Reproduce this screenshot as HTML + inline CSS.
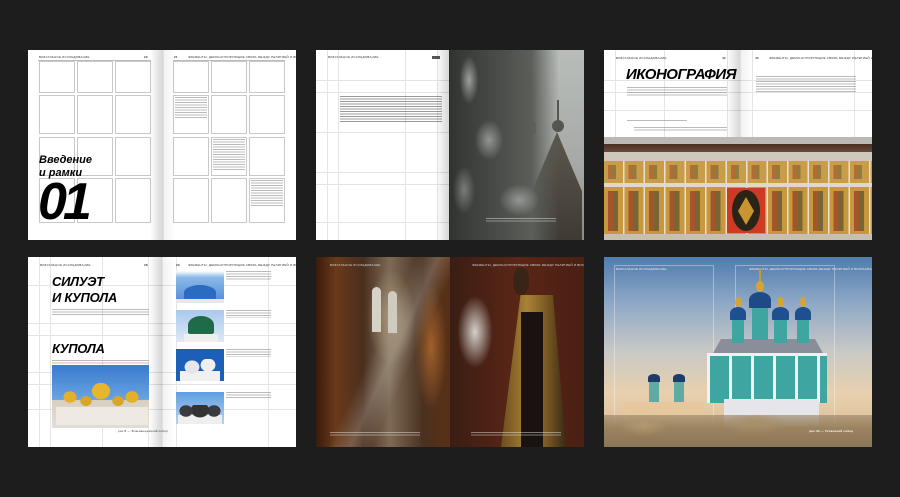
<!DOCTYPE html>
<html><head><meta charset="utf-8"><style>
*{margin:0;padding:0;box-sizing:border-box}
body{width:900px;height:497px;background:#1d1d1d;position:relative;overflow:hidden;font-family:"Liberation Sans",sans-serif}
.a{position:absolute}
.pg{position:absolute;background:#fff;overflow:hidden}
.box{position:absolute;border:1px solid #c8c8c8}
.hd{position:absolute;font-size:3px;color:#333;letter-spacing:.2px;white-space:nowrap}
.t{position:absolute;background:repeating-linear-gradient(#777 0 1px,transparent 1px 2.5px);opacity:.5}
.gv{position:absolute;top:0;bottom:0;width:1px;background:#e4e4e4}
.gh{position:absolute;left:0;right:0;height:1px;background:#e4e4e4}
.gut{position:absolute;top:0;bottom:0;width:26px;background:linear-gradient(90deg,rgba(0,0,0,0),rgba(0,0,0,.16) 50%,rgba(0,0,0,.05) 55%,rgba(0,0,0,0))}
.big{font-family:"Liberation Sans",sans-serif;font-weight:bold;font-style:italic;color:#000;position:absolute;white-space:nowrap}
</style></head><body>

<!-- Spread 1 -->
<div class="pg" style="left:28px;top:50px;width:268px;height:190px">
  <div class="hd" style="left:11px;top:5px">ВИЗУАЛЬНОЕ ИССЛЕДОВАНИЕ</div><div class="hd" style="left:116px;top:5px;font-weight:bold">20</div>
  <div class="hd" style="left:146px;top:5px;font-weight:bold">21</div><div class="hd" style="left:160px;top:5px">ЭЛЕМЕНТЫ, ДЕМОНСТРИРУЮЩИЕ СВЯЗЬ МЕЖДУ РЕЛИГИЕЙ И ВИЗУАЛИЗАЦИЕЙ</div>
  <div class="a" style="left:10px;top:10px;width:113px;height:1px;background:#bbb"></div>
  <div class="a" style="left:145px;top:10px;width:112px;height:1px;background:#bbb"></div>
  <div class="box" style="left:11px;top:11px;width:36px;height:32px"></div><div class="box" style="left:49px;top:11px;width:36px;height:32px"></div><div class="box" style="left:87px;top:11px;width:36px;height:32px"></div>
  <div class="box" style="left:11px;top:45px;width:36px;height:39px"></div><div class="box" style="left:49px;top:45px;width:36px;height:39px"></div><div class="box" style="left:87px;top:45px;width:36px;height:39px"></div>
  <div class="box" style="left:11px;top:87px;width:36px;height:39px"></div><div class="box" style="left:49px;top:87px;width:36px;height:39px"></div><div class="box" style="left:87px;top:87px;width:36px;height:39px"></div>
  <div class="box" style="left:11px;top:128px;width:36px;height:45px"></div><div class="box" style="left:49px;top:128px;width:36px;height:45px"></div><div class="box" style="left:87px;top:128px;width:36px;height:45px"></div>
  <div class="big" style="left:11px;top:104px;font-size:11px;line-height:13px">Введение<br>и рамки</div>
  <div class="big" style="left:10px;top:128px;font-size:52px;line-height:48px;letter-spacing:-4px">01</div>
  <div class="box" style="left:145px;top:11px;width:36px;height:32px"></div><div class="box" style="left:183px;top:11px;width:36px;height:32px"></div><div class="box" style="left:221px;top:11px;width:36px;height:32px"></div>
  <div class="box" style="left:145px;top:45px;width:36px;height:39px"></div><div class="box" style="left:183px;top:45px;width:36px;height:39px"></div><div class="box" style="left:221px;top:45px;width:36px;height:39px"></div>
  <div class="box" style="left:145px;top:87px;width:36px;height:39px"></div><div class="box" style="left:183px;top:87px;width:36px;height:39px"></div><div class="box" style="left:221px;top:87px;width:36px;height:39px"></div>
  <div class="box" style="left:145px;top:128px;width:36px;height:45px"></div><div class="box" style="left:183px;top:128px;width:36px;height:45px"></div><div class="box" style="left:221px;top:128px;width:36px;height:45px"></div>
  <div class="t" style="left:147px;top:47px;width:32px;height:22px"></div>
  <div class="t" style="left:185px;top:89px;width:32px;height:32px"></div>
  <div class="t" style="left:223px;top:130px;width:32px;height:27px"></div>
  <div class="gut" style="left:122px"></div>
</div>

<!-- Spread 2 -->
<div class="pg" style="left:316px;top:50px;width:268px;height:190px">
  <div class="gv" style="left:11px"></div><div class="gv" style="left:22px"></div><div class="gv" style="left:89px"></div><div class="gv" style="left:121px"></div>
  <div class="gh" style="top:30px"></div><div class="gh" style="top:42px"></div><div class="gh" style="top:82px"></div><div class="gh" style="top:122px"></div><div class="gh" style="top:134px"></div><div class="gh" style="top:172px"></div>
  <div class="hd" style="left:12px;top:5px">ВИЗУАЛЬНОЕ ИССЛЕДОВАНИЕ</div><div class="a" style="left:116px;top:6px;width:8px;height:3px;background:#555"></div>
  <div class="t" style="left:24px;top:46px;width:102px;height:26px;opacity:.75"></div>
  <div class="a" style="left:133px;top:0;width:135px;height:190px;background:linear-gradient(180deg,#b9bdba,#a6a9a6 60%,#8a8c87)"></div>
  <div class="a" style="left:150px;top:40px;width:70px;height:80px;background:radial-gradient(ellipse 16px 16px at 40px 20px,#6a6c68 80%,transparent 85%),radial-gradient(ellipse 11px 11px at 62px 38px,#6d6f6a 80%,transparent 85%),radial-gradient(ellipse 30px 40px at 40px 60px,#7e807b 70%,transparent 80%)"></div>
  <div class="a" style="left:216px;top:82px;width:50px;height:108px;background:linear-gradient(180deg,#5c584f,#3f3b34);clip-path:polygon(50% 0,100% 55%,100% 100%,0 100%,0 55%)"></div>
  <div class="a" style="left:236px;top:70px;width:12px;height:12px;border-radius:50%;background:#555550"></div>
  <div class="a" style="left:241px;top:50px;width:1.5px;height:22px;background:#555"></div>
  <div class="a" style="left:133px;top:0;width:110px;height:190px;background:
    radial-gradient(ellipse 12px 30px at 20px 30px,rgba(220,224,220,.6),rgba(0,0,0,0) 80%),
    radial-gradient(ellipse 18px 25px at 40px 90px,rgba(210,214,210,.55),rgba(0,0,0,0) 80%),
    radial-gradient(ellipse 25px 20px at 70px 150px,rgba(210,214,210,.5),rgba(0,0,0,0) 80%),
    radial-gradient(ellipse 14px 30px at 15px 140px,rgba(200,204,200,.45),rgba(0,0,0,0) 80%),
    linear-gradient(90deg,#323531,#4c4f4b 50%,#5b5e59 75%,rgba(90,93,88,0))"></div>
  <div class="t" style="left:170px;top:168px;width:70px;height:5px;background:repeating-linear-gradient(#ddd 0 1px,transparent 1px 2.5px)"></div>
  <div class="gut" style="left:120px"></div>
</div>

<!-- Spread 3 -->
<div class="pg" style="left:604px;top:50px;width:268px;height:190px">
  <div class="gv" style="left:11px"></div><div class="gv" style="left:60px"></div><div class="gv" style="left:123px"></div><div class="gv" style="left:148px"></div><div class="gv" style="left:250px"></div>
  <div class="gh" style="top:30px"></div><div class="gh" style="top:42px"></div><div class="gh" style="top:60px"></div>
  <div class="hd" style="left:12px;top:6px">ВИЗУАЛЬНОЕ ИССЛЕДОВАНИЕ</div><div class="hd" style="left:118px;top:6px;font-weight:bold">40</div>
  <div class="hd" style="left:151px;top:6px;font-weight:bold">40</div><div class="hd" style="left:165px;top:6px">ЭЛЕМЕНТЫ, ДЕМОНСТРИРУЮЩИЕ СВЯЗЬ МЕЖДУ РЕЛИГИЕЙ И ВИЗУАЛИЗАЦИЕЙ</div>
  <div class="big" style="left:22px;top:17px;font-size:15px;letter-spacing:-.5px;line-height:16px">ИКОНОГРАФИЯ</div>
  <div class="t" style="left:23px;top:37px;width:100px;height:9px"></div>
  <div class="t" style="left:152px;top:26px;width:100px;height:16px"></div>
  <div class="t" style="left:23px;top:70px;width:60px;height:2px"></div>
  <div class="t" style="left:30px;top:77px;width:93px;height:5px"></div>
  <div class="gut" style="left:123px"></div>
  <div class="a" style="left:0;top:87px;width:268px;height:103px;background:#d8d2c8">
    <div class="a" style="left:0;top:0;width:268px;height:7px;background:#bdb8b3"></div>
    <div class="a" style="left:0;top:7px;width:268px;height:8px;background:linear-gradient(#4a2f23,#6a4a3a)"></div>
    <div class="a" style="left:0;top:15px;width:268px;height:9px;background:#cfc8bd"></div>
    <div class="a" style="left:0;top:24px;width:268px;height:22px;background:repeating-linear-gradient(90deg,#c99c48 0 19px,#e8e0d2 19px 20.5px)"></div>
    <div class="a" style="left:0;top:28px;width:268px;height:14px;background:repeating-linear-gradient(90deg,transparent 0 4px,rgba(150,50,30,.45) 4px 8px,rgba(40,60,40,.35) 8px 12px,transparent 12px 20.5px)"></div>
    <div class="a" style="left:0;top:46px;width:268px;height:4px;background:#e0d8cc"></div>
    <div class="a" style="left:0;top:50px;width:268px;height:47px;background:repeating-linear-gradient(90deg,#c7983e 0 19px,#e8e0d2 19px 20.5px)"></div>
    <div class="a" style="left:0;top:54px;width:268px;height:40px;background:
      repeating-linear-gradient(90deg,rgba(0,0,0,0) 0 4px,rgba(140,40,30,.6) 4px 9px,rgba(40,50,40,.5) 9px 14px,rgba(0,0,0,0) 14px 20.5px)"></div>
    <div class="a" style="left:123px;top:51px;width:38px;height:45px;background:#cc3b22"></div>
    <div class="a" style="left:128px;top:53px;width:28px;height:41px;border-radius:50%;background:#2a2418"></div>
    <div class="a" style="left:134px;top:60px;width:16px;height:28px;background:#c9952f;clip-path:polygon(50% 0,100% 50%,50% 100%,0 50%)"></div>
    <div class="a" style="left:0;top:97px;width:268px;height:6px;background:#c7bfb5"></div>
  </div>
</div>

<!-- Spread 4 -->
<div class="pg" style="left:28px;top:257px;width:268px;height:190px">
  <div class="gv" style="left:11px"></div><div class="gv" style="left:22px"></div><div class="gv" style="left:74px"></div><div class="gv" style="left:120px"></div><div class="gv" style="left:148px"></div><div class="gv" style="left:240px"></div>
  <div class="gh" style="top:28px"></div><div class="gh" style="top:66px"></div><div class="gh" style="top:78px"></div><div class="gh" style="top:115px"></div><div class="gh" style="top:127px"></div><div class="gh" style="top:152px"></div>
  <div class="hd" style="left:12px;top:6px">ВИЗУАЛЬНОЕ ИССЛЕДОВАНИЕ</div><div class="hd" style="left:116px;top:6px;font-weight:bold">28</div>
  <div class="hd" style="left:148px;top:6px;font-weight:bold">29</div><div class="hd" style="left:160px;top:6px">ЭЛЕМЕНТЫ, ДЕМОНСТРИРУЮЩИЕ СВЯЗЬ МЕЖДУ РЕЛИГИЕЙ И ВИЗУАЛИЗАЦИЕЙ</div>
  <div class="big" style="left:24px;top:17px;font-size:13px;line-height:16px;letter-spacing:-.3px">СИЛУЭТ<br>И КУПОЛА</div>
  <div class="t" style="left:24px;top:52px;width:97px;height:7px"></div>
  <div class="big" style="left:24px;top:84px;font-size:13px;letter-spacing:-.3px">КУПОЛА</div>
  <div class="t" style="left:24px;top:103px;width:97px;height:4px"></div>
  <div class="a" style="left:24px;top:108px;width:97px;height:63px;background:linear-gradient(180deg,#3a7bd0,#6aa3e0 55%,#d8d0c0 56%,#e0ddd8)"></div>
  <div class="a" style="left:28px;top:126px;width:90px;height:26px;background:radial-gradient(ellipse 8px 7px at 14px 14px,#e3b02a 80%,transparent 85%),radial-gradient(ellipse 11px 10px at 45px 8px,#e8b62c 80%,transparent 85%),radial-gradient(ellipse 8px 7px at 76px 14px,#e3b02a 80%,transparent 85%),radial-gradient(ellipse 7px 6px at 30px 18px,#d9a52a 80%,transparent 85%),radial-gradient(ellipse 7px 6px at 62px 18px,#d9a52a 80%,transparent 85%)"></div>
  <div class="a" style="left:28px;top:150px;width:92px;height:18px;background:#eeeae2"></div>
  <div class="hd" style="left:90px;top:172px">рис.8 — Благовещенский собор</div>
  <div class="a" style="left:148px;top:14px;width:48px;height:32px;background:linear-gradient(#fff,#8cb9e8 20%,#4f8ad8)"><div class="a" style="left:8px;top:14px;width:32px;height:15px;border-radius:50% 50% 10% 10%;background:#2a6cc0"></div><div class="a" style="left:0;top:28px;width:48px;height:4px;background:#e8e8e8"></div></div>
  <div class="a" style="left:148px;top:53px;width:48px;height:32px;background:linear-gradient(#a9c8ee,#dfe8f5)"><div class="a" style="left:12px;top:6px;width:26px;height:18px;border-radius:50% 50% 10% 10%;background:#1f6b48"></div><div class="a" style="left:8px;top:24px;width:34px;height:8px;background:#efefef"></div></div>
  <div class="a" style="left:148px;top:92px;width:48px;height:32px;background:#1c5fb8"><div class="a" style="left:4px;top:10px;width:40px;height:22px;background:radial-gradient(ellipse 9px 8px at 12px 8px,#e6e6ea 80%,transparent 85%),radial-gradient(ellipse 9px 8px at 28px 6px,#eee 80%,transparent 85%),linear-gradient(transparent 12px,#f0f0f0 12px)"></div></div>
  <div class="a" style="left:148px;top:135px;width:48px;height:32px;background:linear-gradient(#5f9ee0,#b9d3ef)"><div class="a" style="left:2px;top:13px;width:44px;height:19px;background:radial-gradient(ellipse 8px 7px at 8px 6px,#3b3b3f 80%,transparent 85%),radial-gradient(ellipse 11px 9px at 22px 5px,#333 80%,transparent 85%),radial-gradient(ellipse 8px 7px at 36px 6px,#3b3b3f 80%,transparent 85%),linear-gradient(transparent 10px,#eee 10px)"></div></div>
  <div class="t" style="left:198px;top:14px;width:45px;height:10px"></div><div class="t" style="left:198px;top:53px;width:45px;height:8px"></div><div class="t" style="left:198px;top:92px;width:45px;height:8px"></div><div class="t" style="left:198px;top:135px;width:45px;height:6px"></div>
  <div class="gut" style="left:121px"></div>
</div>

<!-- Spread 5 -->
<div class="a" style="left:316px;top:257px;width:268px;height:190px;overflow:hidden;background:#2a1810">
  <div class="a" style="left:0;top:0;width:134px;height:190px;background:
    linear-gradient(115deg,rgba(0,0,0,0) 45%,rgba(220,220,210,.25) 55%,rgba(0,0,0,0) 65%),
    radial-gradient(ellipse 30px 60px at 75px 60px,#a8967a,rgba(0,0,0,0) 80%),
    radial-gradient(ellipse 20px 80px at 115px 90px,#a0602a,rgba(0,0,0,0) 80%),
    linear-gradient(90deg,#3a1c0c,#6a3a1a 15%,#4a2e1e 35%,#7d6a55 55%,#4a3020 80%,#5a3014)"></div>
  <div class="a" style="left:56px;top:30px;width:9px;height:45px;border-radius:5px 5px 0 0;background:#d6d2c6"></div>
  <div class="a" style="left:72px;top:34px;width:9px;height:42px;border-radius:5px 5px 0 0;background:#cfcbbe"></div>
  <div class="a" style="left:134px;top:0;width:134px;height:190px;background:
    radial-gradient(ellipse 22px 45px at 25px 75px,#d4d2cc,rgba(200,200,195,0) 80%),
    linear-gradient(90deg,#3a1d14,#5a2616 50%,#4a1f14)"></div>
  <div class="a" style="left:185px;top:38px;width:65px;height:152px;background:linear-gradient(90deg,#6b4d1e,#a88236 40%,#7a5a22 70%,#3a2a14);clip-path:polygon(30% 0,80% 0,100% 100%,0 100%)"></div>
  <div class="a" style="left:197px;top:10px;width:16px;height:28px;border-radius:45%;background:#3a2418"></div>
  <div class="a" style="left:205px;top:55px;width:22px;height:135px;background:#1a1210"></div>
  <div class="hd" style="left:14px;top:6px;color:#ddd">ВИЗУАЛЬНОЕ ИССЛЕДОВАНИЕ</div><div class="hd" style="left:156px;top:6px;color:#ddd">ЭЛЕМЕНТЫ, ДЕМОНСТРИРУЮЩИЕ СВЯЗЬ МЕЖДУ РЕЛИГИЕЙ И ВИЗУАЛИЗАЦИЕЙ</div>
  <div class="t" style="left:14px;top:175px;width:90px;height:5px;background:repeating-linear-gradient(#ddd 0 1px,transparent 1px 2.5px)"></div>
  <div class="t" style="left:155px;top:175px;width:90px;height:5px;background:repeating-linear-gradient(#ddd 0 1px,transparent 1px 2.5px)"></div>
</div>

<!-- Spread 6 -->
<div class="a" style="left:604px;top:257px;width:268px;height:190px;overflow:hidden;background:linear-gradient(180deg,#4f7cae,#90a9c6 25%,#c9c9c5 50%,#e8d0ae 72%,#d8b890)">
  <div class="a" style="left:10px;top:8px;width:100px;height:172px;border:1px solid rgba(255,255,255,.35)"></div>
  <div class="a" style="left:131px;top:8px;width:100px;height:172px;border:1px solid rgba(255,255,255,.35)"></div>
  <div class="hd" style="left:12px;top:10px;color:#eee">ВИЗУАЛЬНОЕ ИССЛЕДОВАНИЕ</div><div class="hd" style="left:145px;top:10px;color:#eee">ЭЛЕМЕНТЫ, ДЕМОНСТРИРУЮЩИЕ СВЯЗЬ МЕЖДУ РЕЛИГИЕЙ И ВИЗУАЛИЗАЦИЕЙ</div>
  <div class="a" style="left:108px;top:82px;width:112px;height:16px;background:#8a8e9a;clip-path:polygon(8% 0,92% 0,100% 100%,0 100%)"></div>
  <div class="a" style="left:103px;top:96px;width:120px;height:50px;background:#3fa5a0"></div>
  <div class="a" style="left:103px;top:96px;width:120px;height:50px;background:repeating-linear-gradient(90deg,#f2f2f2 0 3px,transparent 3px 22px)"></div>
  <div class="a" style="left:103px;top:96px;width:120px;height:3px;background:#f0f0f0"></div>
  <div class="a" style="left:128px;top:60px;width:12px;height:26px;background:#3fa5a0"></div>
  <div class="a" style="left:148px;top:47px;width:16px;height:36px;background:#3fa5a0"></div>
  <div class="a" style="left:170px;top:60px;width:13px;height:26px;background:#3fa5a0"></div>
  <div class="a" style="left:193px;top:60px;width:12px;height:26px;background:#3fa5a0"></div>
  <div class="a" style="left:126px;top:50px;width:16px;height:13px;border-radius:50% 50% 5% 5%;background:#1f4f8e"></div>
  <div class="a" style="left:145px;top:35px;width:22px;height:16px;border-radius:50% 50% 5% 5%;background:#1e4a86"></div>
  <div class="a" style="left:168px;top:50px;width:17px;height:13px;border-radius:50% 50% 5% 5%;background:#1f4f8e"></div>
  <div class="a" style="left:191px;top:50px;width:16px;height:13px;border-radius:50% 50% 5% 5%;background:#1f4f8e"></div>
  <div class="a" style="left:152px;top:24px;width:8px;height:11px;border-radius:50%;background:#d4a435"></div>
  <div class="a" style="left:131px;top:40px;width:7px;height:10px;border-radius:50%;background:#d4a435"></div>
  <div class="a" style="left:173px;top:40px;width:7px;height:10px;border-radius:50%;background:#d4a435"></div>
  <div class="a" style="left:196px;top:40px;width:6px;height:10px;border-radius:50%;background:#d4a435"></div>
  <div class="a" style="left:155px;top:12px;width:1.5px;height:12px;background:#c99a30"></div>
  <div class="a" style="left:20px;top:145px;width:80px;height:25px;background:#e7c79e"></div>
  <div class="a" style="left:45px;top:123px;width:10px;height:22px;background:#5faaa5"></div>
  <div class="a" style="left:70px;top:123px;width:10px;height:22px;background:#5faaa5"></div>
  <div class="a" style="left:44px;top:117px;width:12px;height:8px;border-radius:50% 50% 0 0;background:#1d3c6a"></div>
  <div class="a" style="left:69px;top:117px;width:12px;height:8px;border-radius:50% 50% 0 0;background:#1d3c6a"></div>
  <div class="a" style="left:120px;top:142px;width:95px;height:28px;background:#e6e6ea"></div>
  <div class="a" style="left:0;top:158px;width:268px;height:32px;background:radial-gradient(ellipse 30px 14px at 40px 10px,#b09870,transparent 80%),radial-gradient(ellipse 40px 14px at 150px 8px,#a89068,transparent 80%),linear-gradient(180deg,rgba(150,130,100,.6),#9c8460 40%,#8a7556)"></div>
  <div class="hd" style="left:205px;top:172px;color:#fff;font-weight:bold">рис.33 — Успенский собор</div>
</div>

</body></html>
